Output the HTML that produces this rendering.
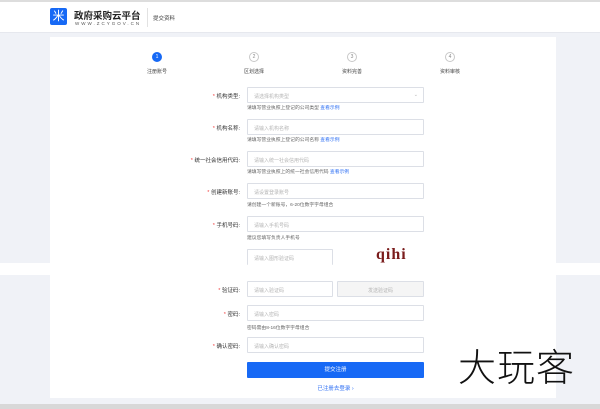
<!DOCTYPE html>
<html><head><meta charset="utf-8"><style>
*{margin:0;padding:0;box-sizing:border-box}
body{width:600px;height:409px;background:#f0f2f7;position:relative;overflow:hidden;font-family:"Liberation Sans","Noto Sans CJK SC",sans-serif;font-size:5px;color:#333}
.a{position:absolute}
.inp{position:absolute;border:1px solid #dcdfe6;background:#fff;height:16px;font-size:5px;color:#b5b5b5;padding:5px 0 0 6px;border-radius:1px}
.lab{position:absolute;right:360px;width:90px;text-align:right;font-size:5.5px;color:#333}
.lab b{color:#f04040;font-weight:normal}
.hint{position:absolute;left:247px;font-size:4.8px;color:#666}
.hint span{color:#2a6df4}
.step{position:absolute;width:60px;text-align:center;font-size:5px;color:#444}
.c{width:10px;height:10px;border-radius:50%;border:1px solid #c8c8c8;margin:0 auto 6px;font-size:5px;line-height:8px;color:#888;background:#fff}
</style></head><body>
<div class="a" style="left:0;top:0;width:600px;height:2px;background:#ddd"></div>
<div class="a" style="left:0;top:2px;width:600px;height:31px;background:#fff;border-bottom:1px solid #e6e8ee"></div>
<div class="a" style="left:50px;top:8px;width:17px;height:17px;background:#1769f5;border-radius:2px;color:#fff;font-size:12px;line-height:17px;text-align:center">米</div>
<div class="a" style="left:74px;top:8px;font-size:9.5px;font-weight:bold;color:#222">政府采购云平台</div>
<div class="a" style="left:75px;top:21px;font-size:4.5px;letter-spacing:2px;color:#555">WWW.ZCYGOV.CN</div>
<div class="a" style="left:147px;top:8px;width:1px;height:19px;background:#e2e2e2"></div>
<div class="a" style="left:153px;top:14px;font-size:5.5px;color:#444">提交资料</div>
<div class="a" style="left:50px;top:37px;width:506px;height:226px;background:#fff"></div>
<div class="a" style="left:0;top:263px;width:600px;height:12px;background:#fff"></div>
<div class="a" style="left:50px;top:275px;width:506px;height:123px;background:#fff"></div>
<div class="a" style="left:0;top:404px;width:600px;height:5px;background:#d8d8d8"></div>
<div class="step" style="left:127px;top:52px"><div class="c" style="background:#1769f5;border-color:#1769f5;color:#fff">1</div>注册账号</div>
<div class="step" style="left:224px;top:52px"><div class="c">2</div>区划选择</div>
<div class="step" style="left:322px;top:52px"><div class="c">3</div>资料完善</div>
<div class="step" style="left:420px;top:52px"><div class="c">4</div>资料审核</div>

<div class="lab" style="top:92px;left:150px"><b>* </b>机构类型:</div>
<div class="inp" style="left:247px;top:87px;width:177px">请选择机构类型<span style="position:absolute;right:5px;top:4px">⌄</span></div>
<div class="hint" style="top:104px">请填写营业执照上登记的公司类型 <span>查看示例</span></div>
<div class="lab" style="top:124px;left:150px"><b>* </b>机构名称:</div>
<div class="inp" style="left:247px;top:119px;width:177px">请输入机构名称</div>
<div class="hint" style="top:136px">请填写营业执照上登记的公司名称 <span>查看示例</span></div>
<div class="lab" style="top:156px;left:150px"><b>* </b>统一社会信用代码:</div>
<div class="inp" style="left:247px;top:151px;width:177px">请输入统一社会信用代码</div>
<div class="hint" style="top:168px">请填写营业执照上的统一社会信用代码 <span>查看示例</span></div>
<div class="lab" style="top:188px;left:150px"><b>* </b>创建新账号:</div>
<div class="inp" style="left:247px;top:183px;width:177px">请设置登录账号</div>
<div class="hint" style="top:201px">请创建一个新账号，6-20位数字字母组合</div>
<div class="lab" style="top:221px;left:150px"><b>* </b>手机号码:</div>
<div class="inp" style="left:247px;top:216px;width:177px">请输入手机号码</div>
<div class="hint" style="top:234px">建议您填写负责人手机号</div>
<div class="inp" style="left:247px;top:249px;width:86px;border-bottom:none">请输入图形验证码</div>
<div class="a" style="left:376px;top:246px;font-family:'Liberation Serif',serif;font-weight:bold;font-size:16px;color:#7a1c1c;letter-spacing:1px">qihi</div>

<div class="lab" style="top:286px;left:150px"><b>* </b>验证码:</div>
<div class="inp" style="left:247px;top:281px;width:86px">请输入验证码</div>
<div class="inp" style="left:337px;top:281px;width:87px;background:#f5f5f5;text-align:center;padding-left:0">发送验证码</div>
<div class="lab" style="top:310px;left:150px"><b>* </b>密码:</div>
<div class="inp" style="left:247px;top:305px;width:177px">请输入密码</div>
<div class="hint" style="top:324px">密码需由8-16位数字字母组合</div>
<div class="lab" style="top:342px;left:150px"><b>* </b>确认密码:</div>
<div class="inp" style="left:247px;top:337px;width:177px">请输入确认密码</div>
<div class="a" style="left:247px;top:362px;width:177px;height:16px;background:#1769f5;border-radius:1px;color:#fff;font-size:5.5px;text-align:center;line-height:16px">提交注册</div>
<div class="a" style="left:247px;top:384px;width:177px;text-align:center;font-size:5.5px;color:#2a6df4">已注册去登录 ›</div>
<div class="a" style="left:458px;top:344px;font-size:38px;color:#111;line-height:42px;font-family:'Noto Sans CJK SC',sans-serif;font-weight:300;letter-spacing:1px">大玩客</div>
</body></html>
